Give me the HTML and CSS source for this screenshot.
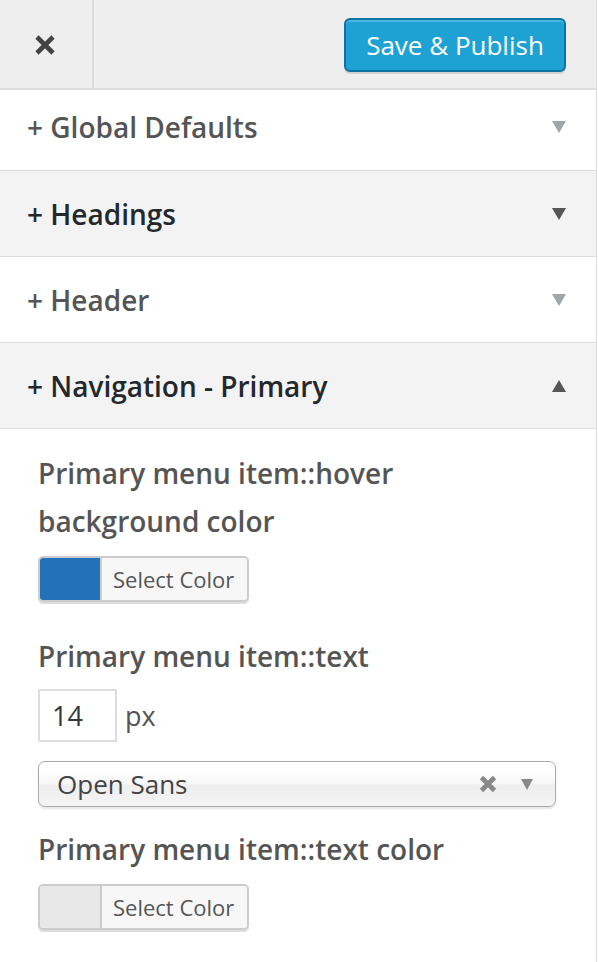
FILE: index.html
```html
<!DOCTYPE html>
<html>
<head>
<meta charset="utf-8">
<link rel="stylesheet" href="styles.css">
</head>
<body>
<div class="panel">
  <div class="topbar">
    <div class="close">
      <svg width="22" height="22" viewBox="0 0 22 22"><path d="M3 3 L19 19 M19 3 L3 19" stroke="#444" stroke-width="4.6" stroke-linecap="butt" fill="none"/></svg>
    </div>
    <div class="actions">
      <button class="publish">Save &amp; Publish</button>
    </div>
  </div>
  <div class="section first"><span class="title muted">+ Global Defaults</span><span class="tri down light"></span></div>
  <div class="section alt"><span class="title">+ Headings</span><span class="tri down dark"></span></div>
  <div class="section"><span class="title muted">+ Header</span><span class="tri down light"></span></div>
  <div class="section alt"><span class="title">+ Navigation - Primary</span><span class="tri up dark"></span></div>
  <div class="content">
    <div class="label">Primary menu item::hover background color</div>
    <div class="color-btn"><span class="swatch blue"></span><span class="color-text">Select Color</span></div>
    <div class="label second">Primary menu item::text</div>
    <div class="size-row"><div class="num">14</div><span class="unit">px</span></div>
    <div class="select"><span class="sel-val">Open Sans</span><svg class="sel-x" width="18" height="18" viewBox="0 0 18 18"><path d="M2.5 2.5 L15.5 15.5 M15.5 2.5 L2.5 15.5" stroke="#888" stroke-width="4.6" fill="none"/></svg><span class="sel-arrow"></span></div>
    <div class="label third">Primary menu item::text color</div>
    <div class="color-btn"><span class="swatch grey"></span><span class="color-text">Select Color</span></div>
  </div>
</div>
</body>
</html>
```
FILE: styles.css
```css
html, body {
  margin: 0;
  padding: 0;
  background: #fff;
}
body {
  font-family: "Open Sans", "Liberation Sans", sans-serif;
  width: 598px;
  height: 962px;
  overflow: hidden;
}
.panel {
  width: 596px;
  height: 962px;
  border-right: 1px solid #ddd;
  background: #fff;
}
.topbar {
  height: 88px;
  background: #eee;
  border-bottom: 2px solid #ddd;
  display: flex;
}
.close {
  width: 92px;
  border-right: 2px solid #ddd;
  display: flex;
  align-items: center;
  justify-content: center;
}
.close svg { display: block; margin-top: 2px; margin-left: -2px; }
.actions {
  flex: 1;
  display: flex;
  align-items: flex-start;
  justify-content: flex-end;
  padding: 18px 30px 0 0;
}
.publish {
  font-family: "Open Sans", "Liberation Sans", sans-serif;
  font-size: 26px;
  color: #fff;
  background: #1ea2d3;
  border: 2px solid #0a74a4;
  border-radius: 6px;
  height: 54px;
  width: 222px;
  padding: 0;
  box-shadow: inset 0 2px 0 rgba(120,200,230,.5), 0 2px 0 rgba(0,0,0,.12);
}
.section {
  height: 85px;
  border-bottom: 1px solid #ddd;
  display: flex;
  align-items: center;
  justify-content: space-between;
  padding: 0 30px 0 27px;
  background: #fff;
}
.section.first { height: 80px; }
.section.alt { background: #f3f3f3; }
.title {
  font-size: 28px;
  font-weight: 600;
  color: #23282d;
}
.title.muted { color: #555; }
.section.first .title { margin-top: -6px; }
.tri {
  width: 0;
  height: 0;
  border-left: 7px solid transparent;
  border-right: 7px solid transparent;
}
.tri.down { border-top: 12px solid #555; }
.tri.up { border-bottom: 12px solid #555; }
.tri.down.light { border-top-color: #a0a5aa; }
.section.first .tri { margin-top: -6px; }
.content {
  padding: 20px 0 0 38px;
}
.label {
  font-size: 28px;
  font-weight: 600;
  color: #555;
  line-height: 48px;
  width: 480px;
}
.label.second { margin-top: 30px; }
.label.third { margin-top: 18px; }
.color-btn {
  margin-top: 11px;
  width: 207px;
  height: 42px;
  border: 2px solid #ccc;
  border-radius: 5px;
  display: flex;
  overflow: hidden;
  box-shadow: 0 2px 0 #ddd;
}
.swatch {
  width: 60px;
  border-right: 2px solid #ccc;
}
.swatch.blue { background: #2271b9; }
.swatch.grey { background: #e8e8e8; }
.color-text {
  flex: 1;
  background: #f7f7f7;
  color: #555;
  font-size: 22px;
  display: flex;
  align-items: center;
  padding-left: 11px;
}
.size-row {
  margin-top: 9px;
  display: flex;
  align-items: center;
}
.num {
  height: 49px;
  border: 2px solid #ddd;
  font-size: 27px;
  color: #32373c;
  display: flex;
  align-items: center;
  padding-left: 12px;
  box-sizing: content-box;
  width: 63px;
}
.unit {
  font-size: 27px;
  color: #555;
  margin-left: 8px;
}
.select {
  margin-top: 19px;
  width: 518px;
  height: 46px;
  box-sizing: border-box;
  border: 1px solid #aaa;
  border-radius: 7px;
  background: linear-gradient(#fff 20%, #f6f6f6 50%, #eee 52%, #f4f4f4 100%);
  box-shadow: 0 2px 2px rgba(0,0,0,.1);
  display: flex;
  align-items: center;
  padding: 0 0 0 18px;
}
.sel-val {
  font-size: 26px;
  color: #444;
  flex: 1;
}
.sel-x {
  display: block;
  margin-right: 24px;
}
.sel-arrow {
  width: 0;
  height: 0;
  border-left: 6px solid transparent;
  border-right: 6px solid transparent;
  border-top: 11px solid #888;
  margin-right: 22px;
}
```
